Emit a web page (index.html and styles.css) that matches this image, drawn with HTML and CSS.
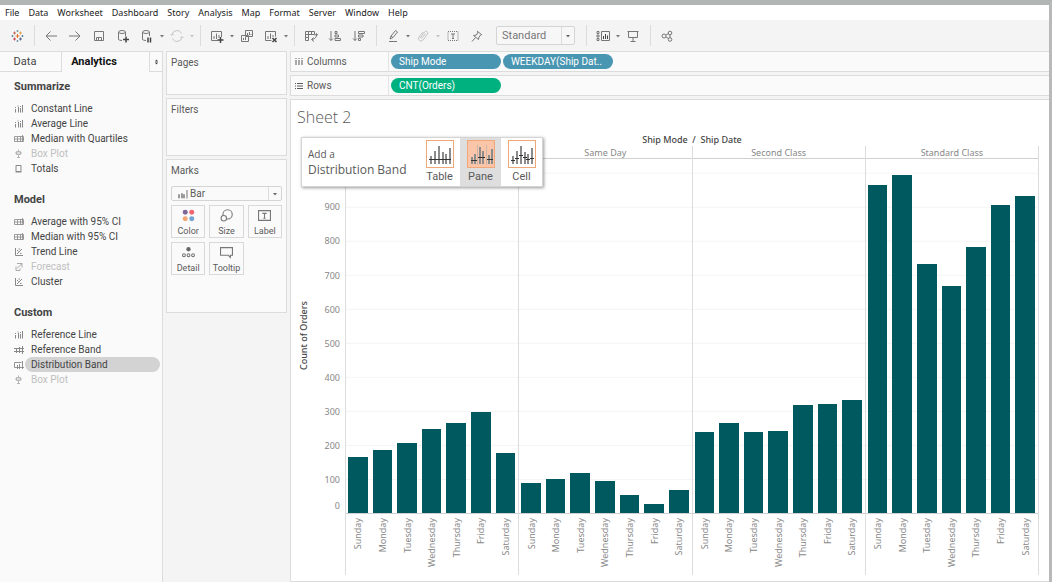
FILE: index.html
```html
<!DOCTYPE html>
<html lang="en">
<head>
    <meta charset="UTF-8">
    <meta name="viewport" content="width=device-width, initial-scale=1.0">
    <title>Sheet 2</title>
    <link rel="stylesheet" href="styles.css">
</head>
<body>

<!-- icon sprites -->
<svg class="sprites" aria-hidden="true">
    <symbol id="i-caret" viewBox="0 0 6 6"><path d="M1 2h4L3 4.5z" fill="currentColor" stroke="none"/></symbol>
    <symbol id="i-bars" viewBox="0 0 10 10"><path d="M1.5 8.500V5M4.500 8.500V3M6.500 8.500V4M8.500 8.500V1M1 3.500h1M3.500 2h1M6 2.500h1"/></symbol>
    <symbol id="i-band" viewBox="0 0 10 10"><path d="M.5 2.500h9v5h-9zM0 5h10M3.500 3v5M6.500 2v6M8.500 1v7" stroke-width=".8"/></symbol>
    <symbol id="i-refband" viewBox="0 0 10 10"><path d="M0 3.500h10M0 6.500h10M2.500 3v5M5.500 2v6M8.500 1v8"/></symbol>
    <symbol id="i-distband" viewBox="0 0 10 10"><path d="M2 7.500H.5v-5h7M3.500 5v4M5.500 4v5M8.500 1v8M2 7.500h8" stroke-width=".9"/></symbol>
    <symbol id="i-boxplot" viewBox="0 0 10 10"><path d="M4.500 .5v2M4.500 6v3M2.500 2.500h4v3h-4zM1 4h7M3 8.500h3" stroke-width=".8"/></symbol>
    <symbol id="i-totals" viewBox="0 0 10 10"><path d="M2 1.500h5v6H2zM1.500 8h6"/></symbol>
    <symbol id="i-trend" viewBox="0 0 10 10"><path d="M1.500 1v7.500H9M3 7l5-5M3 3l1.500 1.500M6 6.500h1.500M4.500 2h1.500"/></symbol>
    <symbol id="i-forecast" viewBox="0 0 10 10"><path d="M3 1.500h5v4M8 1.500l-5 5M2 4.500v4h4v-2"/></symbol>
</svg>

<nav class="menubar" aria-label="Main menu">
    <button>File</button>
    <button>Data</button>
    <button>Worksheet</button>
    <button>Dashboard</button>
    <button>Story</button>
    <button>Analysis</button>
    <button>Map</button>
    <button>Format</button>
    <button>Server</button>
    <button>Window</button>
    <button>Help</button>
</nav>

<div class="toolbar">
    <button class="tool" aria-label="Start page">
        <svg viewBox="0 0 14 14"><path d="M7.500 5v4M5.500 7h4" stroke="#e8762c"/><path d="M4.500 2.500v3M3 4h3" stroke="#c9705d"/><path d="M10.500 2.500v3M9 4h3" stroke="#e9a24b"/><path d="M4.500 8.500v3M3 10h3" stroke="#c84a5b"/><path d="M10.500 8.500v3M9 10h3" stroke="#5b6591"/><path d="M7.500 1v2M6.500 2h2M7.500 11v2M6.500 12h2" stroke="#7199a6"/><path d="M1.500 7h2M2.500 6v2M11.500 7h2M12.500 6v2" stroke="#59879b"/></svg>
    </button>
    <span class="sep"></span>
    <button class="tool" aria-label="Undo"><svg viewBox="0 0 14 14"><path d="M2 7h11M6.500 2.500L2 7l4.500 4.500"/></svg></button>
    <button class="tool" aria-label="Redo"><svg viewBox="0 0 14 14"><path d="M1 7h11M7.500 2.500L12 7l-4.500 4.500"/></svg></button>
    <button class="tool" aria-label="Save"><svg viewBox="0 0 14 14"><path d="M2.500 2.500h9v9h-9zM4.500 11V8.500h5V11M6.500 9v2"/></svg></button>
    <button class="tool" aria-label="New data source"><svg viewBox="0 0 14 14"><ellipse cx="6" cy="3" rx="3.500" ry="1.500"/><path d="M2.500 3v7.500q1 1 3.500 1M9.500 3v4"/><path d="M7 10.500h6M10 7.500v6" stroke="#444" stroke-width="1.500"/></svg></button>
    <button class="tool" aria-label="Pause updates"><svg viewBox="0 0 14 14"><ellipse cx="6" cy="3" rx="3.500" ry="1.500"/><path d="M2.500 3v7.500q1 1 3.500 1M9.500 3v4"/><path d="M8 8.500v5M10.500 8.500v5" stroke="#444" stroke-width="1.500"/></svg></button>
    <button class="more" aria-label="Update options"><svg><use href="#i-caret"/></svg></button>
    <button class="tool" aria-label="Run update" disabled><svg viewBox="0 0 14 14"><path d="M2 6a5 5 0 0 1 9.500-1.500M12 8a5 5 0 0 1-9.500 1.500M.5 5L2 6.500 3.500 5M10.500 9L12 7.500 13.500 9"/></svg></button>
    <button class="more" aria-label="Run options" disabled><svg><use href="#i-caret"/></svg></button>
    <span class="sep"></span>
    <button class="tool" aria-label="New worksheet"><svg viewBox="0 0 14 14"><path d="M8 11.500H1.500v-9h10V8M4 10V7M6.500 10V4.500M9 9V6"/><path d="M7.500 11h6M10.500 8v6" stroke="#444" stroke-width="1.500"/></svg></button>
    <button class="more" aria-label="New worksheet options"><svg><use href="#i-caret"/></svg></button>
    <button class="tool" aria-label="Duplicate"><svg viewBox="0 0 14 14"><path d="M5.500 1.500h7v6h-7zM1.500 6.500h7v6h-7zM7.500 6V4M9.500 6V3M11 6V5M3.500 11V9M5.500 11V8"/></svg></button>
    <button class="tool" aria-label="Clear sheet"><svg viewBox="0 0 14 14"><path d="M7.500 11.500h-6v-9h10v5M4 10V7M6.500 10V4.500M9 8V6"/><path d="M8.500 9l4 4M12.500 9l-4 4" stroke="#444" stroke-width="1.500"/></svg></button>
    <button class="more" aria-label="Clear options"><svg><use href="#i-caret"/></svg></button>
    <span class="sep"></span>
    <button class="tool" aria-label="Swap rows and columns"><svg viewBox="0 0 14 14"><path d="M1.500 2.500h9v3h-9zM1.500 5.500h3v6h-3zM4.500 2.500v3M7.500 2.500v3M1.500 8.500h3M12.500 5q.5 4.500-4.500 5.500M9.500 8.500L7.500 10.500l2.500 2M11 6.500l1.500-2L14 6.500"/></svg></button>
    <button class="tool" aria-label="Sort ascending"><svg viewBox="0 0 14 14"><path d="M3 2v9.500M1 9.500l2 2 2-2M7 2.500h2v2H7zM7 6h3.500v2H7zM7 9.500h5.500v2H7z"/></svg></button>
    <button class="tool" aria-label="Sort descending"><svg viewBox="0 0 14 14"><path d="M3 2v9.500M1 9.500l2 2 2-2M6.500 2.500h6v2h-6zM6.500 6H11v2H6.500zM6.500 9.500h2v2h-2z"/></svg></button>
    <span class="sep"></span>
    <button class="tool" aria-label="Highlight"><svg viewBox="0 0 14 14"><path d="M4 10l1-3 4.500-5.500 2 1.500L7 8.500zM5 7l2 1.500M3 12.500h8"/></svg></button>
    <button class="more" aria-label="Highlight options"><svg><use href="#i-caret"/></svg></button>
    <button class="tool" aria-label="Group members" disabled><svg viewBox="0 0 14 14"><path d="M4 9l4.500-6a1.800 1.800 0 0 1 3 2L7 11a2.500 2.500 0 0 1-4-3l4-5M5.500 9.500l4-5"/></svg></button>
    <button class="more" aria-label="Group options" disabled><svg><use href="#i-caret"/></svg></button>
    <button class="tool" aria-label="Show mark labels"><svg viewBox="0 0 14 14"><path d="M2 2.500h10v9H2z" stroke-dasharray="1 1"/><path d="M5 5h4M7 5v4.500M6 9.500h2"/></svg></button>
    <button class="tool" aria-label="Fix axes"><svg viewBox="0 0 14 14"><path d="M7 2l5 4M8 3L6.500 6 3.500 6.500l5 4L9 8l2-2.500M5.500 8.500L2 12.500"/></svg></button>
    <div class="fit">
        <select aria-label="Fit"><option>Standard</option></select>
        <span class="drop"><svg><use href="#i-caret"/></svg></span>
    </div>
    <span class="sep"></span>
    <button class="tool" aria-label="Show cards"><svg viewBox="0 0 14 14"><path d="M1 2.500h2v2H1zM1 6h2v2H1zM1 9.500h2v2H1zM5.500 2.500h8v9h-8z"/><path d="M7.500 10V7M9.500 10V5M11.500 10V6.500" stroke="#444"/></svg></button>
    <button class="more" aria-label="Card options"><svg><use href="#i-caret"/></svg></button>
    <button class="tool" aria-label="Presentation mode"><svg viewBox="0 0 14 14"><path d="M1.500 2.500h11M2.500 2.500v6h9v-6M7 8.500v4M4.500 12.500h5"/></svg></button>
    <span class="sep"></span>
    <button class="tool" aria-label="Share"><svg viewBox="0 0 14 14"><circle cx="4" cy="7" r="2"/><circle cx="10" cy="4" r="1.800"/><circle cx="10" cy="10.500" r="1.800"/><path d="M6 6l2.500-1.500M6 8l2.500 1.500M10 6v3"/></svg></button>
</div>

<div class="workspace">

    <aside class="side">
        <div class="tabs">
            <button class="tab">Data</button>
            <button class="tab active">Analytics</button>
            <button class="tab-toggle" aria-label="Collapse pane"><svg viewBox="0 0 6 6"><path d="M3 0l2 2.500H1zM3 6L1 3.500h4z" fill="currentColor" stroke="none"/></svg></button>
        </div>
        <section class="group">
            <h2>Summarize</h2>
            <ul>
                <li><button><svg><use href="#i-bars"/></svg><span>Constant Line</span></button></li>
                <li><button><svg><use href="#i-bars"/></svg><span>Average Line</span></button></li>
                <li><button><svg><use href="#i-band"/></svg><span>Median with Quartiles</span></button></li>
                <li><button disabled><svg><use href="#i-boxplot"/></svg><span>Box Plot</span></button></li>
                <li><button><svg><use href="#i-totals"/></svg><span>Totals</span></button></li>
            </ul>
        </section>
        <section class="group">
            <h2>Model</h2>
            <ul>
                <li><button><svg><use href="#i-band"/></svg><span>Average with 95% CI</span></button></li>
                <li><button><svg><use href="#i-band"/></svg><span>Median with 95% CI</span></button></li>
                <li><button><svg><use href="#i-trend"/></svg><span>Trend Line</span></button></li>
                <li><button disabled><svg><use href="#i-forecast"/></svg><span>Forecast</span></button></li>
                <li><button><svg><use href="#i-trend"/></svg><span>Cluster</span></button></li>
            </ul>
        </section>
        <section class="group">
            <h2>Custom</h2>
            <ul>
                <li><button><svg><use href="#i-bars"/></svg><span>Reference Line</span></button></li>
                <li><button><svg><use href="#i-refband"/></svg><span>Reference Band</span></button></li>
                <li><button class="selected"><svg><use href="#i-distband"/></svg><span>Distribution Band</span></button></li>
                <li><button disabled><svg><use href="#i-boxplot"/></svg><span>Box Plot</span></button></li>
            </ul>
        </section>
    </aside>

    <div class="cards">
        <section class="card pages"><h3>Pages</h3></section>
        <section class="card filters"><h3>Filters</h3></section>
        <section class="card marks">
            <h3>Marks</h3>
            <div class="mark-type">
                <svg class="mark-icon" viewBox="0 0 10 10"><path d="M.5 5.500h1V9h-1zM3.500 4.500h1V9h-1zM5.500 5.500h1V9h-1z" stroke="#999"/><path d="M9 1v8.500" stroke="#777"/></svg>
                <select aria-label="Mark type"><option>Bar</option></select>
                <span class="drop"><svg><use href="#i-caret"/></svg></span>
            </div>
            <div class="mark-grid">
                <button><svg viewBox="0 0 12 12"><g stroke="none"><circle cx="3" cy="3" r="2.300" fill="#7d6796"/><circle cx="9" cy="3" r="2.300" fill="#f1666f"/><circle cx="3" cy="9" r="2.300" fill="#f4a672"/><circle cx="9" cy="9" r="2.300" fill="#72a2cf"/></g></svg>Color</button>
                <button><svg viewBox="0 0 12 12"><circle cx="7" cy="5" r="4.300"/><circle cx="3.500" cy="8.500" r="2.500" fill="#fafafa"/></svg>Size</button>
                <button><svg viewBox="0 0 12 12"><path d="M.5 1.500h11v9H.5zM4 4h4M6 4v4.500M5 8.500h2"/></svg>Label</button>
                <button><svg viewBox="0 0 12 12"><circle cx="6" cy="3" r="2" fill="#666" stroke="none"/><circle cx="1.800" cy="8.500" r="1.300"/><circle cx="6" cy="8.500" r="1.300"/><circle cx="10.200" cy="8.500" r="1.300"/></svg>Detail</button>
                <button><svg viewBox="0 0 12 12"><path d="M.5 1.500h11v7h-2v2l-2-2h-7z"/></svg>Tooltip</button>
            </div>
        </section>
    </div>

    <main class="main">
        <div class="shelf">
            <div class="shelf-name"><svg viewBox="0 0 8 8"><path d="M1 0v1M4 0v1M7 0v1M1 2v5M4 2v5M7 2v5"/></svg>Columns</div>
            <button class="pill">Ship Mode</button>
            <button class="pill">WEEKDAY(Ship Dat..</button>
        </div>
        <div class="shelf">
            <div class="shelf-name"><svg viewBox="0 0 8 8"><path d="M0 1.500h1M0 4h1M0 6.500h1M2 1.500h6M2 4h6M2 6.500h6"/></svg>Rows</div>
            <button class="pill measure">CNT(Orders)</button>
        </div>

        <div class="view">
            <h1>Sheet 2</h1>
            <div class="chart">
                <div class="axis-title">Count of Orders</div>
                <div class="axis" id="axis"></div>
                <div class="plot">
                    <div class="plot-title">Ship Mode&nbsp; /&nbsp; Ship Date</div>
                    <div class="panes" id="panes"></div>
                </div>
            </div>

            <div class="drop-target">
                <div class="drop-text">
                    <span>Add a</span>
                    <strong>Distribution Band</strong>
                </div>
                <button class="scope">
                    <svg viewBox="0 0 26 26"><path class="scope-bars" d="M4 23v-8M8 23V10M12 23V5M16 23V11M19 23V13M23 23V7"/><path class="scope-line" d="M2 18.500h22"/></svg>
                    Table
                </button>
                <button class="scope hover">
                    <svg viewBox="0 0 26 26"><path class="scope-split" d="M9.500 4v20M18.500 4v20"/><path class="scope-bars" d="M4 23v-7M7 23V13M12 23V6M15 23V10M21 23v-9M24 23V8"/><path class="scope-line" d="M3 19.500h6M10 16.500h7M19 18.500h6"/></svg>
                    Pane
                </button>
                <button class="scope">
                    <svg viewBox="0 0 26 26"><path class="scope-bars" d="M4 23v-8M8 23V10M12 23V5M16 23V11M19 23V13M23 23V7"/><path class="scope-line" d="M2 19.500h4M6 17.500h4M10 14.500h4M14 16.500h4M17 18.500h4M21 17.500h4"/></svg>
                    Cell
                </button>
            </div>
        </div>
    </main>
</div>

<script src="chart.js"></script>
</body>
</html>
```

FILE: styles.css
```css
* {
    box-sizing: border-box;
}
body {
    margin: 0;
    min-height: 100vh;
    display: flex;
    flex-direction: column;
    border-top: 5px solid #b1b5b3;
    border-right: 3px solid #b9b9b9;
    background: #f4f4f4;
    color: #5a5a5a;
    font-family: Roboto, "Liberation Sans", sans-serif;
    font-size: 10px;
}
h1, h2, h3, ul {
    margin: 0;
    padding: 0;
    font-size: 10px;
    font-weight: normal;
    list-style: none;
}
button, select {
    margin: 0;
    padding: 0;
    border: none;
    border-radius: 0;
    background: none;
    color: inherit;
    font: inherit;
    appearance: none;
}
svg {
    fill: none;
    stroke: currentColor;
    flex: none;
}
.sprites {
    display: none;
}

/* menu and toolbar */
.menubar {
    display: flex;
    gap: 9px;
    height: 15px;
    padding-left: 5px;
    background: #fff;
    color: #222;
    font-family: "Noto Sans", sans-serif;
    font-size: 9px;
}
.toolbar {
    display: flex;
    align-items: center;
    height: 31px;
    padding-left: 5px;
    color: #777;
}
.tool {
    display: flex;
    justify-content: center;
    width: 24px;
}
.tool svg {
    width: 14px;
    height: 14px;
}
.more {
    display: flex;
    width: 6px;
}
.more svg, .drop svg {
    width: 6px;
    height: 6px;
}
.tool:disabled, .more:disabled {
    color: #c4c4c4;
}
.sep {
    width: 1px;
    height: 21px;
    margin: 0 4px 0 5px;
    background: #dcdcdc;
}
.fit {
    display: flex;
    width: 79px;
    height: 19px;
    margin: 0 6px 0 7px;
    border: 1px solid #d4d4d4;
    border-radius: 2px;
    background: #f7f7f7;
}
.fit select, .mark-type select {
    flex: 1;
    min-width: 0;
}
.fit select {
    padding-left: 5px;
    font-size: 11px;
}
.drop {
    display: flex;
    align-items: center;
    justify-content: center;
    width: 13px;
    border-left: 1px solid #dcdcdc;
    color: #666;
}

/* analytics pane */
.workspace {
    flex: 1;
    display: flex;
    gap: 3px;
}
.side {
    width: 163px;
    border: 1px solid #dcdcdc;
    border-width: 1px 1px 0 0;
    background: #fafafa;
    color: #444;
}
.tabs {
    display: flex;
    height: 20px;
    margin-bottom: 7px;
    font-size: 11px;
}
.tab {
    width: 62px;
    padding: 0 11px 1px 0;
    border: 1px solid #dcdcdc;
    border-width: 0 1px 1px 0;
}
.tab.active {
    flex: 1;
    padding: 0 23px 2px 0;
    border: none;
    color: #111;
    font-weight: bold;
}
.tab-toggle {
    width: 13px;
    border: 1px solid #dcdcdc;
    border-width: 0 0 1px 1px;
}
.tab-toggle svg {
    width: 5px;
    height: 6px;
}
.group {
    margin-bottom: 16px;
    padding: 0 2px 0 14px;
}
.group h2 {
    margin-bottom: 6px;
    font-size: 11px;
    font-weight: bold;
    line-height: 16px;
}
.group button {
    display: flex;
    align-items: center;
    width: 100%;
    line-height: 15px;
    text-align: left;
}
.group svg {
    width: 10px;
    height: 10px;
    margin-right: 1px;
    color: #888;
}
.group span {
    flex: 1;
    padding-left: 6px;
    border-radius: 8px;
}
.group .selected span {
    background: #d3d3d3;
}
.group button:disabled, .group button:disabled svg {
    color: #c0c0c0;
}
.group button:disabled svg {
    color: #aaa;
}

/* cards */
.cards {
    display: flex;
    flex-direction: column;
    gap: 3px;
    width: 121px;
}
.card {
    padding: 3px 4px;
    border: 1px solid #dcdcdc;
    background: #fafafa;
}
.card h3 {
    line-height: 16px;
}
.pages {
    min-height: 44px;
}
.filters {
    min-height: 58px;
}
.marks {
    min-height: 154px;
}
.mark-type {
    display: flex;
    align-items: center;
    height: 15px;
    margin: 7px 0 4px;
    border: 1px solid #d4d4d4;
    border-radius: 2px;
}
.mark-icon {
    width: 10px;
    height: 10px;
    margin: 0 2px 0 6px;
}
.mark-type .drop {
    align-self: stretch;
}
.mark-grid {
    display: grid;
    grid-template-columns: repeat(3, 1fr);
    gap: 4px;
}
.mark-grid button {
    display: flex;
    flex-direction: column;
    align-items: center;
    justify-content: space-between;
    height: 33px;
    padding: 3px 0 1px;
    border: 1px solid #d9d9d9;
    font-size: 9px;
}
.mark-grid svg {
    width: 13px;
    height: 13px;
    color: #777;
}

/* shelves */
.main {
    flex: 1;
    min-width: 0;
    display: flex;
    flex-direction: column;
    gap: 3px;
}
.shelf {
    display: flex;
    align-items: center;
    gap: 2px;
    height: 21px;
    border: 1px solid #dcdcdc;
    border-right: none;
    background: #fafafa;
}
.shelf-name {
    display: flex;
    align-self: stretch;
    align-items: center;
    gap: 4px;
    width: 98px;
    padding-left: 4px;
    border-right: 1px solid #e4e4e4;
}
.shelf-name svg {
    width: 8px;
    height: 8px;
}
.pill {
    width: 110px;
    height: 15px;
    padding-left: 8px;
    border-radius: 8px;
    background: #4996b2;
    color: #fff;
    text-align: left;
    white-space: nowrap;
}
.pill.measure {
    background: #00b180;
}

/* sheet */
.view {
    position: relative;
    flex: 1;
    display: flex;
    flex-direction: column;
    padding: 5px 10px 6px 6px;
    border: 1px solid #dcdcdc;
    border-right: none;
    background: #fff;
}
.view h1 {
    margin-bottom: 5px;
    font-family: "Open Sans", sans-serif;
    font-size: 16px;
    font-weight: 300;
    line-height: 24px;
}
.chart {
    flex: 1;
    display: flex;
    color: #888;
    font-family: "Noto Sans", sans-serif;
    font-size: 9px;
}
.axis-title {
    width: 16px;
    padding-top: 38px;
    color: #444;
    font-weight: 500;
    line-height: 14px;
    text-align: center;
    writing-mode: vertical-rl;
    transform: rotate(180deg);
}
.axis {
    display: flex;
    flex-direction: column-reverse;
    width: 32px;
    padding: 25px 5px 61px 0;
}
.tick {
    display: flex;
    align-items: center;
    justify-content: flex-end;
    flex-basis: 0;
    min-height: 0;
}
.plot {
    flex: 1;
    display: flex;
    flex-direction: column;
}
.plot-title {
    height: 12px;
    color: #444;
    font-weight: 500;
    line-height: 12px;
    text-align: center;
}
.panes {
    flex: 1;
    display: flex;
    border-left: 1px solid #dcdcdc;
}
.pane {
    flex: 1;
    display: flex;
    flex-direction: column;
    border-right: 1px solid #dcdcdc;
}
.pane-head {
    height: 13px;
    border-bottom: 1px solid #d0d0d0;
    line-height: 14px;
    text-align: center;
}
.bars {
    flex: 1;
    display: flex;
    align-items: flex-end;
    border-bottom: 1px solid #d0d0d0;
    background: linear-gradient(#f4f4f4 1px, transparent 1px) bottom / 100% calc(100% * 100 / 1040);
}
.bar {
    flex: 1;
    margin: 0 3px 0 2px;
    background: #00595e;
}
.days {
    display: flex;
    height: 61px;
    padding-top: 4px;
}
.day {
    flex: 1;
    display: flex;
    justify-content: center;
    align-items: flex-start;
}
.day span {
    line-height: 12px;
    writing-mode: vertical-rl;
    transform: rotate(180deg);
}

/* drop target popup, floats over the chart */
.drop-target {
    position: absolute;
    top: 37px;
    left: 10px;
    display: flex;
    height: 50px;
    border: 1px solid #d4d4d4;
    background: #fff;
    box-shadow: 1px 1px 3px rgba(0, 0, 0, 0.4);
}
.drop-text {
    display: flex;
    flex-direction: column;
    justify-content: center;
    width: 117px;
    padding-left: 6px;
    font-family: "Open Sans", sans-serif;
    font-size: 10px;
    line-height: 15px;
    white-space: nowrap;
}
.drop-text strong {
    font-size: 12px;
    font-weight: normal;
}
.scope {
    display: flex;
    flex-direction: column;
    align-items: center;
    width: 41px;
    padding-top: 2px;
    font-size: 11px;
    line-height: 18px;
}
.scope svg {
    width: 28px;
    height: 28px;
    border: 1px solid #f0a878;
}
.scope.hover {
    background: #dedede;
}
.scope.hover svg {
    background: #fac5a8;
}
.scope-bars {
    stroke: #8c8c8c;
    stroke-width: 2;
}
.scope-split {
    stroke: #cdb5a6;
}
.scope-line {
    stroke: #333;
}
```

FILE: chart.js
```javascript
const AXIS_MAX = 1040;
const DAYS = ['Sunday', 'Monday', 'Tuesday', 'Wednesday', 'Thursday', 'Friday', 'Saturday'];
const ORDERS = [
    { mode: 'First Class', counts: [165, 186, 207, 248, 265, 297, 177] },
    { mode: 'Same Day', counts: [88, 100, 119, 95, 54, 27, 69] },
    { mode: 'Second Class', counts: [239, 263, 237, 241, 317, 319, 333] },
    { mode: 'Standard Class', counts: [965, 993, 733, 668, 781, 904, 930] }
];

// each label sits in a slot around its value, the 0 slot is only half as high
function drawAxis() {
    const axis = document.getElementById('axis');
    for (let value = 0; value <= 900; value += 100) {
        axis.innerHTML += `<div class="tick" style="flex-grow: ${value === 0 ? 50 : 100}">${value}</div>`;
    }
    axis.innerHTML += `<div class="tick" style="flex-grow: ${AXIS_MAX - 950}"></div>`;
}

function drawPanes() {
    document.getElementById('panes').innerHTML = ORDERS.map((pane, i) => `
        <div class="pane">
            <div class="pane-head">${i === 0 ? '' : pane.mode}</div>
            <div class="bars">
                ${pane.counts.map(n => `<div class="bar" style="height: ${n / AXIS_MAX * 100}%"></div>`).join('')}
            </div>
            <div class="days">
                ${DAYS.map(day => `<div class="day"><span>${day}</span></div>`).join('')}
            </div>
        </div>`).join('');
}

drawAxis();
drawPanes();
```
